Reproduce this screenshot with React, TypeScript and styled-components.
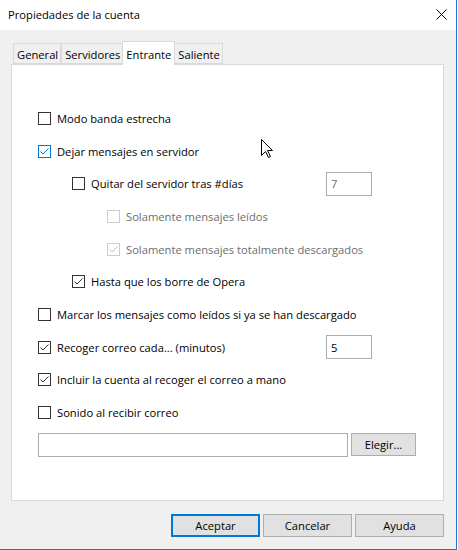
import React from "react";
import styled, { createGlobalStyle } from "styled-components";

const GlobalStyle = createGlobalStyle`
  html, body {
    margin: 0;
    padding: 0;
    background: #ffffff;
  }
  body {
    font-family: "Segoe UI", "Open Sans", "Noto Sans", sans-serif;
    font-size: 11.2px;
    color: #000000;
  }
`;

type CheckState = "off" | "on";
type CheckLook = "normal" | "hover" | "disabled";

const lookColors: Record<CheckLook, { border: string; mark: string }> = {
  normal: { border: "#333333", mark: "#333333" },
  hover: { border: "#0078d7", mark: "#0078d7" },
  disabled: { border: "#cccccc", mark: "#bcbcbc" },
};

function Check({ state, look }: { state: CheckState; look: CheckLook }) {
  const c = lookColors[look];
  return (
    <Style.Box $border={c.border}>
      {state === "on" && (
        <svg width="11" height="11" viewBox="0 0 11 11">
          <polyline
            points="1.5,5.5 4,8 9.5,2.5"
            fill="none"
            stroke={c.mark}
            strokeWidth="1"
          />
        </svg>
      )}
    </Style.Box>
  );
}

const options: {
  label: string;
  level: number;
  state: CheckState;
  look: CheckLook;
  field?: { value: string; disabled: boolean };
}[] = [
  { label: "Modo banda estrecha", level: 0, state: "off", look: "normal" },
  { label: "Dejar mensajes en servidor", level: 0, state: "on", look: "hover" },
  {
    label: "Quitar del servidor tras #días",
    level: 1,
    state: "off",
    look: "normal",
    field: { value: "7", disabled: true },
  },
  { label: "Solamente mensajes leídos", level: 2, state: "off", look: "disabled" },
  {
    label: "Solamente mensajes totalmente descargados",
    level: 2,
    state: "on",
    look: "disabled",
  },
  { label: "Hasta que los borre de Opera", level: 1, state: "on", look: "normal" },
  {
    label: "Marcar los mensajes como leídos si ya se han descargado",
    level: 0,
    state: "off",
    look: "normal",
  },
  {
    label: "Recoger correo cada... (minutos)",
    level: 0,
    state: "on",
    look: "normal",
    field: { value: "5", disabled: false },
  },
  {
    label: "Incluir la cuenta al recoger el correo a mano",
    level: 0,
    state: "on",
    look: "normal",
  },
  { label: "Sonido al recibir correo", level: 0, state: "off", look: "normal" },
];

const tabs = ["General", "Servidores", "Entrante", "Saliente"];

export default function App() {
  return (
    <>
      <GlobalStyle />
      <Style.Window>
        <Style.TitleBar>
          <Style.Title>Propiedades de la cuenta</Style.Title>
          <svg width="11" height="11" viewBox="0 0 11 11">
            <path d="M0.5 0.5 L10.5 10.5 M10.5 0.5 L0.5 10.5" stroke="#000" strokeWidth="1" />
          </svg>
        </Style.TitleBar>
        <Style.Body>
          <Style.Tabs>
            {tabs.map((t) => (
              <Style.Tab key={t} $active={t === "Entrante"}>
                {t}
              </Style.Tab>
            ))}
          </Style.Tabs>
          <Style.Panel>
            {options.map((o, i) => (
              <Style.Row key={i}>
                <Style.Option $level={o.level} $disabled={o.look === "disabled"}>
                  <Check state={o.state} look={o.look} />
                  <span>{o.label}</span>
                </Style.Option>
                {o.field && (
                  <Style.NumberField $disabled={o.field.disabled}>
                    {o.field.value}
                  </Style.NumberField>
                )}
              </Style.Row>
            ))}
            <Style.FileRow>
              <Style.PathField />
              <Style.SmallButton>Elegir...</Style.SmallButton>
            </Style.FileRow>
            <Style.Cursor width="13" height="20" viewBox="0 0 13 20">
              <path
                d="M0.5 0.5 L0.5 16.5 L4.5 12.5 L7.5 18.5 L9.5 17.5 L6.5 11.5 L11.5 11.5 Z"
                fill="#ffffff"
                stroke="#000000"
                strokeWidth="1"
                strokeLinejoin="miter"
              />
            </Style.Cursor>
          </Style.Panel>
          <Style.Footer>
            <Style.Button $default>Aceptar</Style.Button>
            <Style.Button>Cancelar</Style.Button>
            <Style.Button>Ayuda</Style.Button>
          </Style.Footer>
        </Style.Body>
      </Style.Window>
    </>
  );
}

const Style = {
  Window: styled.div`
    width: 456px;
    height: 549px;
    border-right: 1px solid #1a7ad0;
    border-bottom: 1px solid #1a7ad0;
    display: flex;
    flex-direction: column;
    background: #f0f0f0;
  `,
  TitleBar: styled.div`
    height: 30px;
    background: #ffffff;
    display: flex;
    align-items: center;
    justify-content: space-between;
    padding: 0 9px 1px 8px;
    box-sizing: border-box;
  `,
  Title: styled.span`
    font-size: 11.2px;
  `,
  Body: styled.div`
    flex: 1;
    padding: 11px 12px 0 11px;
    display: flex;
    flex-direction: column;
  `,
  Tabs: styled.div`
    display: flex;
    align-items: flex-end;
    height: 23px;
    padding-left: 2px;
    position: relative;
    z-index: 1;
  `,
  Tab: styled.div<{ $active?: boolean }>`
    box-sizing: border-box;
    height: ${(p) => (p.$active ? "24px" : "21px")};
    padding: ${(p) => (p.$active ? "1px 3px 0" : "1px 2px 0 3px")};
    margin: ${(p) => (p.$active ? "0 -1px -1px -1px" : "0")};
    background: ${(p) => (p.$active ? "#ffffff" : "#f0f0f0")};
    border: 1px solid #d9d9d9;
    border-bottom: ${(p) => (p.$active ? "none" : "1px solid #d9d9d9")};
    position: relative;
    z-index: ${(p) => (p.$active ? 2 : 0)};
    & + & {
      border-left: ${(p) => (p.$active ? "1px solid #d9d9d9" : "none")};
    }
    display: flex;
    align-items: center;
    white-space: nowrap;
  `,
  Panel: styled.div`
    position: relative;
    height: 437px;
    box-sizing: border-box;
    background: #ffffff;
    border: 1px solid #d9d9d9;
    padding: 37px 26px 0 26px;
    display: flex;
    flex-direction: column;
  `,
  Row: styled.div`
    height: 32.7px;
    display: flex;
    align-items: center;
  `,
  Option: styled.label<{ $level: number; $disabled?: boolean }>`
    display: flex;
    align-items: center;
    gap: 6px;
    margin-left: ${(p) => [0, 34, 69][p.$level]}px;
    color: ${(p) => (p.$disabled ? "#6d6d6d" : "#000000")};
    white-space: nowrap;
  `,
  Box: styled.span<{ $border: string }>`
    width: 13px;
    height: 13px;
    box-sizing: border-box;
    border: 1px solid ${(p) => p.$border};
    background: #ffffff;
    display: inline-flex;
    align-items: center;
    justify-content: center;
    flex-shrink: 0;
  `,
  NumberField: styled.div<{ $disabled?: boolean }>`
    margin-left: auto;
    margin-right: 45px;
    width: 46px;
    height: 24px;
    box-sizing: border-box;
    border: 1px solid #acacac;
    background: #ffffff;
    color: ${(p) => (p.$disabled ? "#6d6d6d" : "#000000")};
    padding: 0 4px;
    display: flex;
    align-items: center;
  `,
  FileRow: styled.div`
    margin-top: 4px;
    margin-right: 1px;
    display: flex;
    align-items: center;
    gap: 3px;
  `,
  PathField: styled.div`
    flex: 1;
    height: 24px;
    box-sizing: border-box;
    border: 1px solid #acacac;
    background: #ffffff;
  `,
  SmallButton: styled.div`
    width: 65px;
    height: 23px;
    box-sizing: border-box;
    background: #e1e1e1;
    border: 1px solid #adadad;
    display: flex;
    align-items: center;
    justify-content: center;
  `,
  Cursor: styled.svg`
    position: absolute;
    left: 249px;
    top: 74px;
  `,
  Footer: styled.div`
    display: flex;
    justify-content: flex-end;
    gap: 3px;
    padding-top: 13px;
  `,
  Button: styled.div<{ $default?: boolean }>`
    width: 89px;
    height: 23px;
    box-sizing: border-box;
    background: #e1e1e1;
    border: ${(p) => (p.$default ? "2px solid #0078d7" : "1px solid #adadad")};
    display: flex;
    align-items: center;
    justify-content: center;
  `,
};
